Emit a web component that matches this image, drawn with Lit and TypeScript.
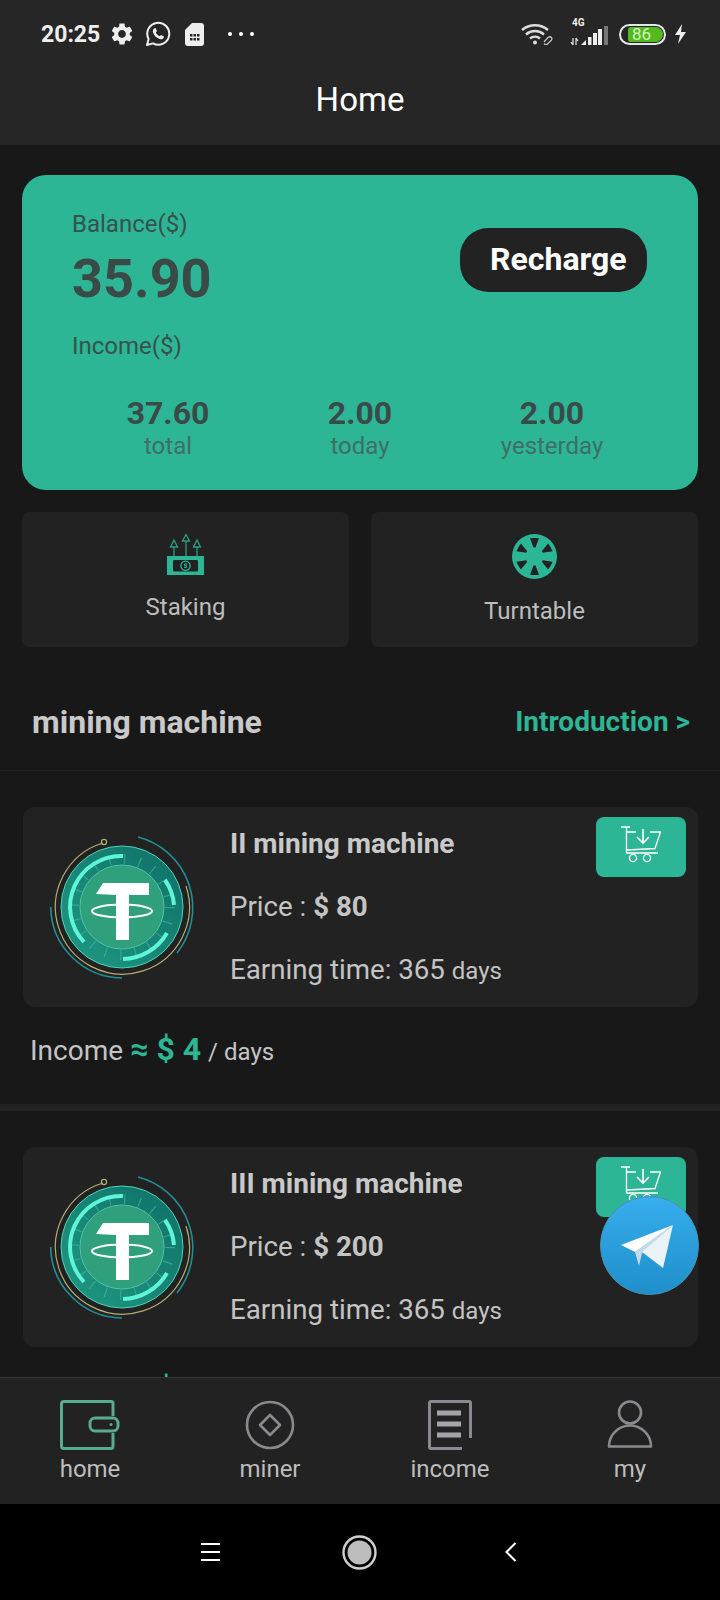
import { LitElement, html, css, svg } from "lit";
import { customElement } from "lit/decorators.js";

const machines = [
  { name: "II mining machine", price: 80, income: 4 },
  { name: "III mining machine", price: 200, income: 10 },
];

const stats = [
  { value: "37.60", label: "total" },
  { value: "2.00", label: "today" },
  { value: "2.00", label: "yesterday" },
];

const tetherLogo = svg`
  <svg class="logo" viewBox="0 0 150 150">
    <defs>
      <linearGradient id="disc" x1="0" y1="1" x2="1" y2="0">
        <stop offset="0" stop-color="#1f9a82" />
        <stop offset="1" stop-color="#0f6f68" />
      </linearGradient>
    </defs>
    <path d="M91 5 A73 73 0 0 1 130 121" fill="none" stroke="#1f8f96" stroke-width="1.6" />
    <path d="M3.7 75 A72 72 0 0 0 75 146" fill="none" stroke="#1f8f96" stroke-width="1.6" />
    <path d="M139 54 A67 67 0 1 1 56 11" fill="none" stroke="#b4ad72" stroke-width="1.2" />
    <circle cx="57" cy="10" r="2.6" fill="none" stroke="#a8b273" stroke-width="1.2" />
    <circle cx="75" cy="75" r="61" fill="url(#disc)" stroke="#4fd3b8" stroke-width="1" />
    <circle cx="75" cy="75" r="48" fill="none" stroke="#3fb59c" stroke-width="10" stroke-dasharray="1.2 14" opacity="0.7" />
    <circle cx="75" cy="75" r="42" fill="#2f9f7c" stroke="#4fc3a4" stroke-width="1" />
    <path d="M76 24 A51 51 0 0 0 37 110" fill="none" stroke="#5ff5d8" stroke-width="4" />
    <path d="M118 48 A51 51 0 0 1 127 73" fill="none" stroke="#5ff5d8" stroke-width="4" />
    <path d="M120 101 A52 52 0 0 1 76 127" fill="none" stroke="#5ff5d8" stroke-width="4" />
    <path d="M49 62 L56 51 H102 V63 H82 V108 H69 V63 Z" fill="#fff" />
    <ellipse cx="75" cy="79" rx="30" ry="6.5" fill="none" stroke="#fff" stroke-width="2" />
  </svg>
`;

const cartIcon = svg`
  <svg class="cart" viewBox="0 0 40 37" fill="none" stroke="#fff" stroke-width="1.3">
    <path d="M0 1 H9 M5.5 1 V27 M5 27 H37 M5.5 24 L34 22.5 L39.5 6 H29 M15 6 H5.5" />
    <path d="M22 3 V17 M16 11 L22 17 L28 11" stroke-width="1.6" />
    <circle cx="12" cy="32" r="3.6" />
    <circle cx="26" cy="32" r="3.6" />
  </svg>
`;

const wedges = [0, 60, 120, 180, 240, 300];

@customElement("app-root")
export class AppRoot extends LitElement {
  static styles = css`
    * {
      margin: 0;
      padding: 0;
      box-sizing: border-box;
    }
    :host {
      display: flex;
      flex-direction: column;
      position: relative;
      width: 720px;
      height: 1600px;
      overflow: hidden;
      background: #181818;
      font-family: Roboto, "Liberation Sans", sans-serif;
      color: #c9c9c9;
    }
    .top {
      height: 145px;
      flex: none;
      background: #262626;
    }
    .status {
      height: 68px;
      display: flex;
      align-items: center;
      padding: 0 33px 0 41px;
      color: #eee;
    }
    .time {
      font-size: 23px;
      font-weight: 700;
      margin-right: 10px;
      width: 58px;
    }
    .status svg {
      display: block;
      flex: none;
    }
    .whatsapp {
      margin-left: 10px;
    }
    .sim {
      margin-left: 14px;
    }
    .spacer {
      flex: 1;
    }
    .dots {
      display: flex;
      gap: 7px;
      margin-left: 24px;
    }
    .dots i {
      width: 4px;
      height: 4px;
      background: #fff;
      border-radius: 50%;
    }
    .net {
      position: relative;
      width: 38px;
      height: 28px;
      margin: 0 11px 0 17px;
    }
    .net b {
      position: absolute;
      left: 2px;
      top: -3px;
      font-size: 10px;
      line-height: 12px;
      color: #eee;
    }
    .battery {
      width: 47px;
      height: 21px;
      border: 2px solid #e6e6e6;
      border-radius: 11px;
      padding: 1px 1px 1px 7px;
      margin-right: 8px;
    }
    .battery span {
      display: block;
      width: 35px;
      height: 15px;
      background: #54b81f;
      border-radius: 3px 8px 8px 3px;
      color: #d2f5b8;
      font-size: 17px;
      line-height: 15px;
      padding-left: 4px;
    }
    .title {
      text-align: center;
      color: #fff;
      font-size: 33px;
      line-height: 62px;
      padding-top: 1px;
    }
    main {
      flex: 1;
      min-height: 0;
      overflow: hidden;
      padding-top: 30px;
    }
    .balance {
      margin: 0 22px;
      height: 315px;
      border-radius: 24px;
      background: #2db696;
      padding: 35px 50px 0;
      color: #36524b;
    }
    .balance-top {
      display: flex;
      justify-content: space-between;
      align-items: flex-start;
    }
    .small {
      font-size: 24px;
      line-height: 28px;
    }
    .amount {
      font-size: 54px;
      font-weight: 700;
      line-height: 64px;
      color: #3a4a47;
      margin: 9px 0 21px;
    }
    .recharge {
      margin: 18px 1px 0 0;
      width: 187px;
      height: 64px;
      border-radius: 28px;
      background: #222;
      color: #fff;
      font-size: 32px;
      font-weight: 700;
      line-height: 62px;
      padding-left: 30px;
    }
    .stats {
      display: grid;
      grid-template-columns: repeat(3, 1fr);
      text-align: center;
      margin-top: 34px;
    }
    .stats b {
      display: block;
      font-size: 32px;
      line-height: 38px;
      color: #3a4a47;
    }
    .stats span {
      display: block;
      font-size: 24px;
      line-height: 28px;
      color: #3e6f63;
    }
    .actions {
      display: grid;
      grid-template-columns: 1fr 1fr;
      gap: 22px;
      margin: 22px 22px 0;
    }
    .action {
      height: 135px;
      background: #222;
      border-radius: 8px;
      padding-top: 22px;
      display: flex;
      flex-direction: column;
      align-items: center;
      font-size: 24px;
      color: #bdbdbd;
    }
    .action svg {
      display: block;
      margin-bottom: 18px;
    }
    .section {
      display: flex;
      justify-content: space-between;
      align-items: center;
      height: 124px;
      padding: 26px 30px 0 32px;
      border-bottom: 1px solid #1f1f1f;
    }
    .section h2 {
      font-size: 32px;
      color: #c9c9c9;
    }
    .section a {
      font-size: 28px;
      font-weight: 700;
      color: #2db696;
    }
    .machine {
      padding-top: 36px;
      border-bottom: 7px solid #222;
    }
    .machine-card {
      position: relative;
      display: flex;
      margin: 0 22px 0 23px;
      height: 200px;
      background: #222;
      border-radius: 12px;
      padding: 25px 0 0 24px;
    }
    .logo {
      display: block;
      width: 150px;
      height: 150px;
      flex: none;
    }
    .info {
      margin: -25px 0 0 33px;
      padding-top: 17px;
      font-size: 27.7px;
      color: #c4c4c4;
    }
    .info h3 {
      font-size: 28px;
      line-height: 40px;
      color: #c9c9c9;
    }
    .info p {
      line-height: 40px;
      margin-top: 23px;
    }
    .info b {
      font-weight: 700;
    }
    .info small {
      font-size: 24px;
    }
    .buy {
      position: absolute;
      top: 10px;
      right: 12px;
      width: 90px;
      height: 60px;
      border-radius: 8px;
      background: #2db696;
      display: flex;
      justify-content: center;
      padding-top: 9px;
    }
    .cart {
      display: block;
      width: 40px;
      height: 37px;
    }
    .income {
      height: 97px;
      padding-left: 30px;
      font-size: 28px;
      line-height: 84px;
      color: #c4c4c4;
    }
    .income b {
      font-size: 32px;
      color: #2db696;
    }
    .income small {
      font-size: 24px;
    }
    .tabs {
      flex: none;
      height: 127px;
      background: #222;
      border-top: 1px solid #333;
      display: grid;
      grid-template-columns: repeat(4, 1fr);
    }
    .tab {
      display: flex;
      flex-direction: column;
      align-items: center;
      padding-top: 22px;
      font-size: 24px;
      line-height: 28px;
      color: #bdbdbd;
    }
    .tab svg {
      display: block;
      margin-bottom: 5px;
    }
    .nav {
      flex: none;
      height: 96px;
      background: #000;
      display: flex;
      align-items: center;
      padding-left: 201px;
    }
    .nav svg {
      display: block;
    }
    .burger {
      margin-right: 122px;
    }
    .back {
      margin-left: 128px;
    }
    .telegram {
      position: absolute;
      left: 600px;
      top: 1196px;
      width: 99px;
      height: 99px;
    }
  `;

  private statusBar() {
    return html`
      <div class="status">
        <span class="time">20:25</span>
        <svg width="26" height="26" viewBox="0 0 24 24" fill="#eee">
          <path d="M19.14 12.94c.04-.3.06-.61.06-.94 0-.32-.02-.64-.07-.94l2.03-1.58c.18-.14.23-.41.12-.61l-1.92-3.32c-.12-.22-.37-.29-.59-.22l-2.39.96c-.5-.38-1.03-.7-1.62-.94l-.36-2.54c-.04-.24-.24-.41-.48-.41h-3.84c-.24 0-.43.17-.47.41l-.36 2.54c-.59.24-1.13.57-1.62.94l-2.39-.96c-.22-.08-.47 0-.59.22L2.74 8.87c-.12.21-.08.47.12.61l2.03 1.58c-.05.3-.09.63-.09.94s.02.64.07.94l-2.03 1.58c-.18.14-.23.41-.12.61l1.92 3.32c.12.22.37.29.59.22l2.39-.96c.5.38 1.03.7 1.62.94l.36 2.54c.05.24.24.41.48.41h3.84c.24 0 .44-.17.47-.41l.36-2.54c.59-.24 1.13-.56 1.62-.94l2.39.96c.22.08.47 0 .59-.22l1.92-3.32c.12-.22.07-.47-.12-.61l-2.01-1.58zM12 15.6c-1.98 0-3.6-1.62-3.6-3.6s1.62-3.6 3.6-3.6 3.6 1.62 3.6 3.6-1.62 3.6-3.6 3.6z" />
        </svg>
        <svg class="whatsapp" width="26" height="26" viewBox="0 0 26 26">
          <path d="M2 24 L3.6 18 A11 11 0 1 1 8 22.4 Z" fill="none" stroke="#eee" stroke-width="2" stroke-linejoin="round" />
          <path d="M9 7.5 L10.6 7 L12 10 L10.8 11.4 C11.6 13 13 14.4 14.6 15.2 L16 14 L19 15.6 L18.4 17.2 C17.6 18.4 16 18.6 14.4 18 C11.2 16.8 9 14.6 8 11.6 C7.6 10 8 8.4 9 7.5 Z" fill="#eee" />
        </svg>
        <svg class="sim" width="19" height="23" viewBox="0 0 19 23">
          <path d="M7 0 H16 Q19 0 19 3 V20 Q19 23 16 23 H3 Q0 23 0 20 V7 Z" fill="#eee" />
          <path d="M5 11 h2.5 v2.5 h-2.5z M8.5 11 h2.5 v2.5 h-2.5z M12 11 h2.5 v2.5 h-2.5z M5 15 h2.5 v2.5 h-2.5z M8.5 15 h2.5 v2.5 h-2.5z M12 15 h2.5 v2.5 h-2.5z" fill="#262626" />
        </svg>
        <div class="dots"><i></i><i></i><i></i></div>
        <div class="spacer"></div>
        <svg width="32" height="22" viewBox="0 0 32 22" fill="none" stroke="#ddd">
          <path d="M1 7 A20 20 0 0 1 27 7" stroke-width="2.4" />
          <path d="M5 11.5 A13.5 13.5 0 0 1 23 11.5" stroke-width="2.4" />
          <path d="M9 15.5 A7.5 7.5 0 0 1 19 15.5" stroke-width="2.4" />
          <circle cx="14" cy="19.5" r="2" fill="#ddd" stroke="none" />
          <path d="M23 19 L27 14.5 Q29 13 30.5 14.5 Q31.5 16 30 17.5 L26 21.5 Q24 22 23 20.5" stroke="#c4c4c4" stroke-width="1.3" />
        </svg>
        <div class="net">
          <b>4G</b>
          <svg width="38" height="28" viewBox="0 0 38 28">
            <path d="M3 18 V25 M3 25 L1 22 M6 25 V18 M6 18 L8 21" stroke="#ddd" stroke-width="1.3" fill="none" />
            <path d="M11 25 L16 20 V25 Z" fill="#eee" />
            <rect x="18" y="17" width="3.5" height="8" fill="#eee" />
            <rect x="23" y="13" width="4" height="12" fill="#eee" />
            <rect x="28" y="9" width="4" height="16" fill="#eee" />
            <rect x="34" y="6" width="4" height="19" fill="#777" />
          </svg>
        </div>
        <div class="battery"><span>86</span></div>
        <svg width="13" height="20" viewBox="0 0 13 20">
          <path d="M8 0 L1 11 H6 L4 20 L12 8 H7 Z" fill="#eee" />
        </svg>
      </div>
      <div class="title">Home</div>
    `;
  }

  private stakingIcon() {
    return html`
      <svg width="37" height="41" viewBox="0 0 37 41" fill="none" stroke="#2a9d83" stroke-width="1.3">
        <path d="M7 22 V13 M3.5 13 L7 6 L10.5 13 Z M19 22 V7 M15.5 7 L19 0.5 L22.5 7 Z M30 22 V13 M26.5 13 L30 6 L33.5 13 Z" />
        <rect x="0" y="22" width="37" height="19" fill="#2db696" stroke="none" />
        <rect x="6" y="26" width="25" height="11.5" rx="1" fill="#222" stroke="none" />
        <circle cx="18.5" cy="31.7" r="4.6" stroke="#2db696" />
        <path d="M20 30 H17.5 V31.7 H19.5 V33.4 H17" stroke="#2db696" stroke-width="1" />
      </svg>
    `;
  }

  private turntableIcon() {
    return html`
      <svg width="45" height="45" viewBox="0 0 45 45">
        <circle cx="22.5" cy="22.5" r="22.5" fill="#2db696" />
        ${wedges.map(
          (a) => svg`<path d="M21.5 13.5 L18 4.2 Q22.5 3.6 27 4.2 L23.5 13.5 Z" transform="rotate(${a} 22.5 22.5)" fill="#222" />`
        )}
        <circle cx="22.5" cy="22.5" r="7" fill="#2db696" />
      </svg>
    `;
  }

  private tabIcon(name: string) {
    if (name === "home") {
      return html`<svg width="60" height="50" viewBox="0 0 60 50" fill="none" stroke="#59ab8f" stroke-width="3">
        <path d="M53 16 V3 Q53 1.5 51 1.5 H4 Q1.5 1.5 1.5 4 V46 Q1.5 48.5 4 48.5 H51 Q53 48.5 53 46 V33" />
        <rect x="30" y="18" width="28" height="13" rx="5" />
        <circle cx="51" cy="24.5" r="1.5" fill="#59ab8f" stroke="none" />
      </svg>`;
    }
    if (name === "miner") {
      return html`<svg width="50" height="50" viewBox="0 0 50 50" fill="none" stroke="#8b898f" stroke-width="2.6">
        <circle cx="25" cy="25" r="23" />
        <path d="M25 15 L35 25 L25 35 L15 25 Z" stroke-linejoin="round" />
      </svg>`;
    }
    if (name === "income") {
      return html`<svg width="44" height="50" viewBox="0 0 44 50" fill="none" stroke="#8b898f" stroke-width="3">
        <path d="M42.5 38 V3 Q42.5 1.5 41 1.5 H3 Q1.5 1.5 1.5 3 V47 Q1.5 48.5 3 48.5 H34" />
        <path d="M9 13 H33 M9 24 H33 M9 35 H33" stroke="#a5a3ab" stroke-width="5" />
      </svg>`;
    }
    return html`<svg width="46" height="50" viewBox="0 0 46 50" fill="none" stroke="#8b898f" stroke-width="2.6">
      <circle cx="23" cy="12.5" r="11" />
      <path d="M2 46.5 A21 21 0 0 1 44 46.5 Z" stroke-linejoin="round" />
    </svg>`;
  }

  render() {
    return html`
      <div class="top">${this.statusBar()}</div>
      <main>
        <section class="balance">
          <div class="balance-top">
            <div>
              <div class="small">Balance($)</div>
              <div class="amount">35.90</div>
            </div>
            <div class="recharge">Recharge</div>
          </div>
          <div class="small">Income($)</div>
          <div class="stats">
            ${stats.map((s) => html`<div><b>${s.value}</b><span>${s.label}</span></div>`)}
          </div>
        </section>
        <div class="actions">
          <div class="action">${this.stakingIcon()}<span>Staking</span></div>
          <div class="action">${this.turntableIcon()}<span>Turntable</span></div>
        </div>
        <div class="section">
          <h2>mining machine</h2>
          <a>Introduction &gt;</a>
        </div>
        ${machines.map(
          (m) => html`
            <div class="machine">
              <div class="machine-card">
                ${tetherLogo}
                <div class="info">
                  <h3>${m.name}</h3>
                  <p>Price : <b>$ ${m.price}</b></p>
                  <p>Earning time: 365 <small>days</small></p>
                </div>
                <div class="buy">${cartIcon}</div>
              </div>
              <div class="income">Income <b>≈ $ ${m.income}</b> <small>/ days</small></div>
            </div>
          `
        )}
      </main>
      <div class="tabs">
        ${["home", "miner", "income", "my"].map(
          (t) => html`<div class="tab">${this.tabIcon(t)}<span>${t}</span></div>`
        )}
      </div>
      <div class="nav">
        <svg class="burger" width="19" height="18" viewBox="0 0 19 18" stroke="#fff" stroke-width="2">
          <path d="M0 1 H19 M0 9 H19 M0 17 H19" />
        </svg>
        <svg width="35" height="35" viewBox="0 0 35 35">
          <circle cx="17.5" cy="17.5" r="16" fill="none" stroke="#d0d0d0" stroke-width="2.4" />
          <circle cx="17.5" cy="17.5" r="12" fill="#bdbdbd" />
        </svg>
        <svg class="back" width="11" height="20" viewBox="0 0 11 20" fill="none" stroke="#fff" stroke-width="2">
          <path d="M10.5 1 L1.5 10 L10.5 19" />
        </svg>
      </div>
      <svg class="telegram" viewBox="0 0 99 99">
        <defs>
          <linearGradient id="tg" x1="0" y1="0" x2="0" y2="1">
            <stop offset="0" stop-color="#37aeee" />
            <stop offset="1" stop-color="#1e8fc9" />
          </linearGradient>
        </defs>
        <circle cx="49.5" cy="49.5" r="49" fill="url(#tg)" stroke="#4a8fb5" stroke-width="1" />
        <path d="M35 56 L73 29 L42 57 L39 70 Z" fill="#c6d9e6" />
        <path d="M21 49 L73 29 L35 56 Z" fill="#fff" />
        <path d="M73 29 L42 56 L63 72 Z" fill="#eaf2f8" />
      </svg>
    `;
  }
}
